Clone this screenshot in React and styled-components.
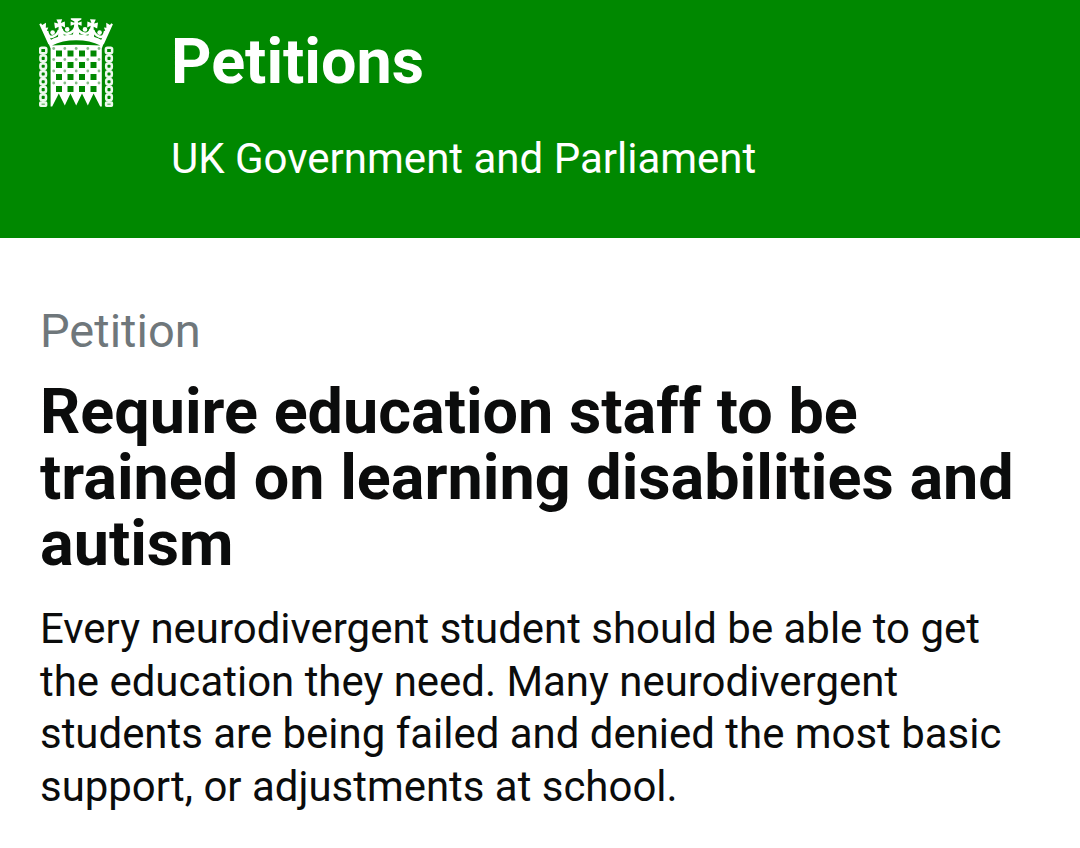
import styled, { createGlobalStyle } from 'styled-components';

const GlobalStyle = createGlobalStyle`
	body {
		margin: 0;
		background: #fff;
		color: #0b0c0c;
		font-family: Roboto, 'Liberation Sans', sans-serif;
	}
`;

const COLUMNS = [29, 40.5, 52, 63.5];
const ROWS = [43.5, 55, 67, 79];
const RIVET_COLUMNS = [23.7, 34.8, 46.2, 57.8, 69];
const RIVET_ROWS = [38.5, 49.5, 61, 73];
const LINKS = [48.4, 56.2, 64, 71.8, 79.6, 87.4];

const Chain = ({ x }) => (
	<g fill="none" stroke="#eef8ee" strokeWidth="2.5">
		<rect x={x - 3.1} y="37.7" width="6.2" height="5.6" rx="1.5" />
		{LINKS.map((y) => (
			<rect key={y} x={x - 2.8} y={y - 2.8} width="5.6" height="5.6" rx="2" />
		))}
		<path
			d={`M${x} 44 V46 M${x} 51.4 V53.4 M${x} 59 V61 M${x} 67 V69 M${x} 75 V77 M${x} 82.5 V84.5 M${x} 90 V92`}
		/>
		<rect x={x - 2.9} y="92.6" width="5.8" height="3.2" rx="0.5" />
	</g>
);

// left half of the crown, mirrored for the right one
const CrownSide = () => (
	<g>
		<path
			fill="#fff"
			d="M9.3 14.2 L11 13.2 L12.2 15 L16 12.8 L15.8 17.8 L18.3 17.5 L17 20.5 L21.5 31 L18.5 34.5 Z"
		/>
		<path
			fill="#fff"
			d="M26.4 9.6 L32.2 9.2 L30.8 13 L34.8 11.4 L35 17.4 L31.5 15.8 L34 26 L28 27.5 L28.6 16.8 L25 18.6 L24.2 12.6 L28.2 13.6 Z"
		/>
		<circle cx="22.6" cy="22.6" r="2.3" fill="#fff" />
		<circle cx="37.2" cy="19.4" r="2.3" fill="#fff" />
		<path
			fill="none"
			stroke="#fff"
			strokeWidth="2.6"
			d="M17 21 Q18 28 23 26.6 Q27.5 25 29 20 M31.5 19 Q33 24.5 38 23.6 Q43.5 22.5 45.5 17"
		/>
	</g>
);

const PortcullisContainer = ({ className }) => (
	<svg className={className} viewBox="9 8 75 90" role="img" aria-label="UK Parliament">
		<CrownSide />
		<g transform="matrix(-1 0 0 1 92.2 0)">
			<CrownSide />
		</g>
		<path
			fill="#fff"
			d="M40.8 8.2 H51.4 L51.4 9.6 L47.8 11.6 L48 12.8 L51.6 11.4 V15.8 L48 14.4 L49.4 26 H42.8 L44.2 14.4 L40.6 15.8 V11.4 L44.2 12.8 L44.4 11.6 L40.8 9.6 Z"
		/>
		<path
			fill="#fff"
			d="M18 32 Q22 28 31 26 Q46 22.5 61 26 Q70 28 74.2 32 L71.8 38.5 V96.5 H70.2 L63.6 83.5 L57.8 95.5 L52 83.5 L46.2 95.5 L40.4 83.5 L34.8 95.5 L28.8 83.5 L22.2 96.5 H20.6 V38.5 Z"
		/>
		<path fill="#008800" d="M22 35.6 Q32 30.2 46.2 30.2 Q60 30.2 70.4 35.6 Q58 34.8 46.2 34.8 Q34 34.8 22 35.6 Z" />
		{ROWS.map((y) =>
			COLUMNS.map((x) => (
				<rect
					key={`${x}-${y}`}
					x={x - 3}
					y={y - 3}
					width="6"
					height="6"
					fill="#008800"
				/>
			)),
		)}
		{RIVET_ROWS.map((y) =>
			RIVET_COLUMNS.map((x) => (
				<circle key={`${x}-${y}`} cx={x} cy={y} r="1.4" fill="#87bd87" />
			)),
		)}
		<Chain x={13.2} />
		<Chain x={79} />
	</svg>
);

const Portcullis = styled(PortcullisContainer)`
	display: block;
	flex: none;
	width: 75px;
	height: 90px;
`;

const Header = styled.header`
	display: flex;
	align-items: flex-start;
	gap: 57px;
	box-sizing: border-box;
	height: 238px;
	padding: 18px 39px 0;
	background: #008800;
	color: #fff;
`;

const SiteName = styled.div`
	padding-top: 6px;
	font-size: 62.9px;
	font-weight: 700;
	line-height: 76px;
`;

const Tagline = styled.div`
	margin-top: 33px;
	font-size: 42px;
	line-height: 52px;
`;

const Main = styled.main`
	padding: 64px 40px 0;
`;

const Title = styled.h1`
	margin: 0;
	font-size: 62.9px;
	font-weight: 700;
	line-height: 66px;
`;

const Caption = styled.span`
	display: block;
	margin-bottom: 19px;
	color: #6f777b;
	font-size: 47px;
	font-weight: 400;
	line-height: 58px;
`;

const Text = styled.p`
	margin: 26px 0 0;
	font-size: 41.95px;
	line-height: 52.5px;
`;

const App = () => (
	<>
		<GlobalStyle />
		<Header>
			<Portcullis />
			<div>
				<SiteName>Petitions</SiteName>
				<Tagline>UK Government and Parliament</Tagline>
			</div>
		</Header>
		<Main>
			<Title>
				<Caption>Petition</Caption>
				Require education staff to be trained on learning disabilities and autism
			</Title>
			<Text>
				Every neurodivergent student should be able to get the education they need.
				Many neurodivergent students are being failed and denied the most basic
				support, or adjustments at school.
			</Text>
		</Main>
	</>
);

export default App;
